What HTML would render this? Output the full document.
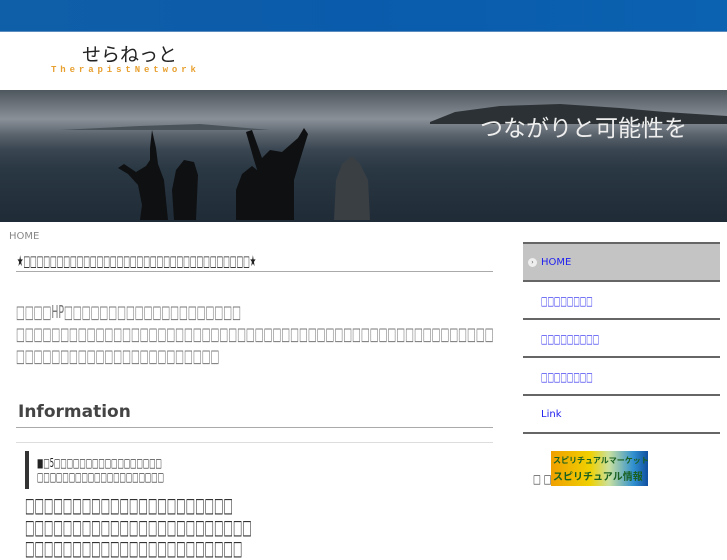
<!DOCTYPE html>
<html><head><meta charset="utf-8"><style>
*{margin:0;padding:0;box-sizing:border-box}
body{width:727px;height:545px;overflow:hidden;background:#fff;font-family:"DejaVu Sans","Liberation Sans",sans-serif;position:relative}
.a{position:absolute;white-space:nowrap;transform-origin:0 0;line-height:1}
.top{left:0;top:0;width:727px;height:32px;background:linear-gradient(90deg,#0f5ea8,#0a5bab 50%,#0b62b0);border-bottom:1px solid #5a8cc0}
.ban{left:0;top:90px;width:727px;height:132px;background:linear-gradient(180deg,#4e565e 0%,#8a9098 22%,#5a636c 34%,#3a4652 45%,#2a3844 60%,#1f2b36 100%);overflow:hidden}
.g{color:#777;font-size:18px;transform:scaleX(0.52)}
.nav{left:523px;width:197px;height:38px;border-bottom:2px solid #666;color:#2222ee;font-size:10px;padding-left:18px;line-height:38px}
.nav span{display:inline-block;font-size:12px;transform:scaleX(0.57);transform-origin:0 50%}
.big{left:25px;font-size:20px;color:#333;transform:scaleX(0.5)}
.bq{left:37px;font-size:12px;color:#222;transform:scaleX(0.56)}
</style></head><body>
<div class="a top"></div>
<div class="a" style="left:82px;top:42px;font-size:19px;color:#222;font-family:'Noto Sans CJK JP',sans-serif;line-height:24px">せらねっと</div>
<div class="a" style="left:51px;top:66px;font-size:9px;color:#e8a030;letter-spacing:3.9px;font-weight:bold;font-family:'Liberation Mono',monospace">TherapistNetwork</div>
<div class="a ban">
<svg width="727" height="132" style="position:absolute;left:0;top:0">
<path d="M430 32 L455 22 L500 16 L560 14 L620 18 L665 22 L727 26 L727 34 L430 34Z" fill="#2b3134"/>
<path d="M60 40 L140 36 L200 34 L270 40Z" fill="#4a525a"/>
<g fill="#0f1012">
<path d="M140 130 L142 115 L138 95 L128 84 L118 78 L124 74 L136 82 L146 76 L150 70 L150 58 L152 40 L156 58 L158 74 L164 90 L168 130Z"/>
<path d="M174 130 L172 100 L176 80 L184 70 L194 72 L198 85 L196 130Z"/>
<path d="M236 130 L236 100 L242 84 L252 76 L262 84 L268 100 L266 130Z"/>
<path d="M262 130 L262 95 L254 70 L246 42 L252 40 L262 68 L270 60 L282 62 L298 48 L304 38 L308 44 L300 70 L294 90 L294 130Z"/>
</g>
<path d="M334 130 L336 90 L342 74 L352 66 L360 74 L368 90 L370 130Z" fill="#3a3f44"/>
<text x="480" y="46" font-family="Noto Sans CJK JP,sans-serif" font-size="23" fill="#eee">つながりと可能性を</text>
</svg></div>
<div class="a" style="left:9px;top:232px;font-size:10px;color:#888">HOME</div>
<div class="a" style="left:17px;top:254px;font-size:15px;color:#222;transform:scaleX(0.47)">★□□□□□□□□□□□□□□□□□□□□□□□□□□□□□□□□□□★</div>
<div class="a" style="left:16px;top:271px;width:477px;height:1px;background:#aaa"></div>
<div class="a g" style="left:16px;top:304px">□□□□HP□□□□□□□□□□□□□□□□□□□□</div>
<div class="a g" style="left:16px;top:326px">□□□□□□□□□□□□□□□□□□□□□□□□□□□□□□□□□□□□□□□□□□□□□□□□□□□□□□</div>
<div class="a g" style="left:16px;top:348px">□□□□□□□□□□□□□□□□□□□□□□□</div>
<div class="a" style="left:18px;top:404px;font-size:17px;font-weight:bold;color:#444">Information</div>
<div class="a" style="left:16px;top:427px;width:477px;height:1px;background:#aaa"></div>
<div class="a" style="left:16px;top:442px;width:477px;height:1px;background:#ddd"></div>
<div class="a" style="left:25px;top:451px;width:4px;height:38px;background:#333"></div>
<div class="a bq" style="top:457px">■□5□□□□□□□□□□□□□□□□□</div>
<div class="a bq" style="top:471px">□□□□□□□□□□□□□□□□□□□□</div>
<div class="a big" style="top:495px">□□□□□□□□□□□□□□□□□□□□□□</div>
<div class="a big" style="top:517px">□□□□□□□□□□□□□□□□□□□□□□□□</div>
<div class="a big" style="top:538px">□□□□□□□□□□□□□□□□□□□□□□□</div>
<div class="a" style="left:523px;top:242px;width:197px;height:2px;background:#666"></div>
<div class="a nav" style="top:244px;background:#c4c4c4">HOME</div>
<div class="a" style="left:528px;top:258px;width:9px;height:9px;border-radius:50%;background:#eee;font-size:6px;line-height:9px;text-align:center;color:#555">›</div>
<div class="a nav" style="top:282px"><span>□□□□□□□□</span></div>
<div class="a nav" style="top:320px"><span>□□□□□□□□□</span></div>
<div class="a nav" style="top:358px"><span>□□□□□□□□</span></div>
<div class="a nav" style="top:396px">Link</div>
<div class="a" style="left:533px;top:473px;font-size:12px;color:#333;transform:scaleX(0.7)">□ □</div>
<div class="a" style="left:551px;top:451px;width:97px;height:35px;overflow:hidden;background:linear-gradient(90deg,#f0a000,#f0d000 40%,#c8e0a0 60%,#3090d0 85%,#1050a0);font-size:8px;font-weight:bold;color:#1a6020;line-height:15px;padding:2px 0 0 2px;font-family:'Noto Sans CJK JP',sans-serif">スピリチュアルマーケット<br><span style="font-size:10px">スピリチュアル情報</span></div>
</body></html>
